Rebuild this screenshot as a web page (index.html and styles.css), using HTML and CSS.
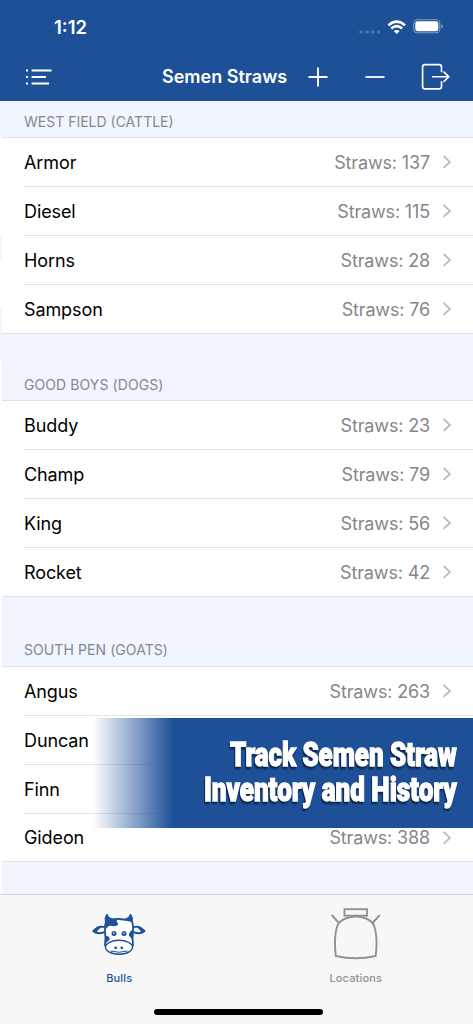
FILE: index.html
```html
<!DOCTYPE html>
<html lang="en">
<head>
<meta charset="utf-8">
<title>Semen Straws</title>
<link rel="stylesheet" href="styles.css">
</head>
<body>
<svg width="0" height="0" class="defs"><symbol id="chevron" viewBox="0 0 10 16"><path d="M1.6 1.9 7.8 7.9 1.6 13.9" fill="none" stroke="#bdbdc1" stroke-width="2"/></symbol></svg>
<div class="screen">
  <header class="top">
    <div class="status">
      <span class="time">1:12</span>
      <div class="indicators">
        <svg class="dots" width="22" height="6" viewBox="0 0 22 6" fill="#4d76ae"><circle cx="2" cy="3" r="1.8"/><circle cx="8" cy="3" r="1.8"/><circle cx="13.8" cy="3" r="1.8"/><circle cx="19.6" cy="3" r="1.8"/></svg>
        <svg class="wifi" width="20" height="15" viewBox="0 0 20 15" fill="none" stroke="#fff" stroke-width="2.5"><path d="M1.4 5.4Q9.7-2.2 18 5.4M4.3 8.5q5.4-4.8 10.8 0"/><path d="m9.7 14-2.9-2.9q2.9-2.2 5.8 0z" fill="#fff" stroke="none"/></svg>
        <svg class="battery" width="31" height="16" viewBox="0 0 31 16"><rect x=".8" y=".8" width="26" height="13" rx="3.6" fill="none" stroke="#7f9bc6" stroke-width="1.1"/><rect x="2.3" y="2.3" width="23" height="10" rx="2.2" fill="#fff"/><path d="M28.4 5.2q1.6.7 1.6 2.2t-1.6 2.2z" fill="#7f9bc6"/></svg>
      </div>
    </div>
    <nav class="nav">
      <svg class="list-icon" width="28" height="20" viewBox="0 0 28 20" fill="none" stroke="#fff" stroke-width="2"><path d="M1 3.500h2M1 10h2M1 16.500h2M6.600 3.500h20M6.600 10h14.300M6.600 16.500h17.500"/></svg>
      <h1>Semen Straws</h1>
      <svg class="plus" width="20" height="20" viewBox="0 0 20 20" stroke="#fff" stroke-width="1.8"><path d="M.5 10h19M10 .5v19"/></svg>
      <svg class="minus" width="20" height="20" viewBox="0 0 20 20" stroke="#fff" stroke-width="1.8"><path d="M.5 10h19"/></svg>
      <svg class="exit" width="30" height="28" viewBox="0 0 30 28" fill="none" stroke="#fff" stroke-width="1.6"><path d="M20.500 9.200V4q0-2.400-2.400-2.400H4Q1.600 1.600 1.600 4v19.500q0 2.400 2.400 2.400h14.100q2.400 0 2.400-2.400v-5.200M11 13.800h16.800M22.500 8.700l5.300 5.100-5.300 5.100"/></svg>
    </nav>
  </header>
  <main class="content">
    <section>
      <h2 class="first">WEST FIELD (CATTLE)</h2>
      <ul>
        <li><b>Armor</b><span>Straws: 137</span><svg><use href="#chevron"/></svg></li>
        <li><b>Diesel</b><span>Straws: 115</span><svg><use href="#chevron"/></svg></li>
        <li><b>Horns</b><span>Straws: 28</span><svg><use href="#chevron"/></svg></li>
        <li><b>Sampson</b><span>Straws: 76</span><svg><use href="#chevron"/></svg></li>
      </ul>
    </section>
    <section>
      <h2 class="second">GOOD BOYS (DOGS)</h2>
      <ul>
        <li><b>Buddy</b><span>Straws: 23</span><svg><use href="#chevron"/></svg></li>
        <li><b>Champ</b><span>Straws: 79</span><svg><use href="#chevron"/></svg></li>
        <li><b>King</b><span>Straws: 56</span><svg><use href="#chevron"/></svg></li>
        <li><b>Rocket</b><span>Straws: 42</span><svg><use href="#chevron"/></svg></li>
      </ul>
    </section>
    <section>
      <h2 class="third">SOUTH PEN (GOATS)</h2>
      <ul>
        <li><b>Angus</b><span>Straws: 263</span><svg><use href="#chevron"/></svg></li>
        <li><b>Duncan</b></li>
        <li><b>Finn</b></li>
        <li><b>Gideon</b><span>Straws: 388</span><svg><use href="#chevron"/></svg></li>
      </ul>
    </section>
    <i class="edge"></i>
  </main>
  <footer class="tabs">
    <a class="tab active">
      <svg width="54" height="46" viewBox="0 0 54 46" fill="none" stroke="#1f5199" stroke-width="1.8" stroke-linejoin="round">
        <path fill="#1f5199" stroke-width="1" d="M13.500 10.500Q12 5.500 15 2 16 6 20 7zM40 10.500Q41.500 5.500 38.500 2 37.500 6 33.500 7z"/>
        <path d="M13 15.500Q7 12.500 1.200 19.200 5 23 13 19.800M41 15.500Q46.500 12.500 52.600 19.200 48.500 23 41 19.800"/>
        <path fill="#1f5199" stroke="none" d="M1 19.500Q5 12.500 12.500 14.500 7.500 15 4.500 20.500zM52.800 19.500Q48.500 12.500 41.500 14.500 46.500 15 49.500 20.500z"/>
        <path fill="#fff" d="M14.500 9Q20 6.500 27 7T39.500 9Q41.600 12 41 20 40 26 41 33 39 42 27 42 15 42 13 33 14 26 13 20 12.500 12 14.500 9Z"/>
        <path fill="#1f5199" stroke="none" d="M14 9.500Q19 6 25 7.200 24 9.500 26.500 12 24 15 20.500 14 16.500 12.500 14 17zM13.200 24Q18.500 23.500 17.500 28 14.500 29.500 13 33zM41 17.500Q36 20.500 37 24 40 25.500 40.800 31z"/>
        <ellipse cx="27" cy="35.200" rx="13.500" ry="6.900" stroke-width="1.400" fill="#fff"/><path d="M18.500 39Q27 41.500 35.500 39" stroke-width="1"/>
        <g fill="#1f5199" stroke="none"><circle cx="22" cy="21.500" r="2.500"/><circle cx="32" cy="21.500" r="2.500"/><circle cx="23.700" cy="35.800" r="1.400"/><circle cx="29.800" cy="35.800" r="1.400"/></g>
        <g fill="#fff" stroke="none"><circle cx="21.800" cy="21" r=".8"/><circle cx="31.800" cy="21" r=".8"/></g>
      </svg>
      <span>Bulls</span>
    </a>
    <a class="tab">
      <svg class="tank" width="52" height="54" viewBox="0 0 52 54" fill="none" stroke="#929292" stroke-width="1.900"><rect x="14.500" y="2.200" width="22.500" height="6.500"/><path d="M5.800 49Q3.500 30 7.500 18.500 9.500 14 15.500 11.500 25.700 7.500 36 11.500 42 14 44 18.500 48 30 45.700 49 25.700 53.500 5.800 49ZM8.500 15.500 1.700 8M43 15.500 49.800 8"/></svg>
      <span>Locations</span>
    </a>
    <i class="home"></i>
  </footer>
  <div class="banner">
    <svg width="270" height="110" viewBox="0 0 270 110">
      <text transform="translate(27 48) scale(.79 1)" textLength="287" lengthAdjust="spacingAndGlyphs">Track Semen Straw</text>
      <text transform="translate(1 83) scale(.79 1)" textLength="320" lengthAdjust="spacingAndGlyphs">Inventory and History</text>
    </svg>
  </div>
</div>
</body>
</html>
```

FILE: styles.css
```css
* { box-sizing: border-box; }
body { margin: 0; font-family: Inter, "Liberation Sans", sans-serif; background: #fff; }
.defs { position: absolute; }
.screen { position: relative; width: 473px; height: 1024px; overflow: hidden; display: flex; flex-direction: column; background: #f0f5ff; }
.top { height: 101px; background: #1e5098; color: #fff; flex: none; }
.status { height: 52px; padding: 2px 29px 0 54px; display: flex; justify-content: space-between; align-items: center; }
.time { font-size: 18.5px; font-weight: 600; }
.indicators { display: flex; align-items: center; }
.dots { margin: 9px 6px 0 0; }
.wifi { margin-right: 6px; }
.nav { height: 49px; display: flex; align-items: center; padding: 0 22px 0 25px; }
.nav svg { flex: none; }
h1 { margin: 0 0 0 109px; width: 126px; font-size: 18px; font-weight: 600; white-space: nowrap; }
.plus { margin-left: 20px; }
.minus { margin-left: 37px; }
.exit { margin-left: auto; }
.content { position: relative; height: 793px; flex: none; }
h2 { margin: 0; padding: 42px 0 0 24px; font-size: 14px; line-height: 18px; font-weight: 400; letter-spacing: .08px; color: #87888d; border-bottom: 1px solid #dfe1e6; white-space: nowrap; }
h2.first { height: 37px; padding-top: 12px; letter-spacing: 0; }
h2.second { height: 67px; }
h2.third { height: 70px; padding-top: 44px; }
ul { margin: 0; padding: 0 0 0 24px; list-style: none; background: #fff; border-bottom: 1px solid #dfe1e6; }
li { height: 49px; display: flex; align-items: center; padding-right: 21px; font-size: 18px; color: #86868a; border-bottom: 1px solid #e4e4e6; }
li:last-child { border: 0; height: 48px; }
section:nth-child(2) li:last-child { height: 48px; }
section:nth-child(3) li:last-child { height: 47px; }
li b { flex: 1; font-weight: 400; color: #000; letter-spacing: -.1px; }
li span { letter-spacing: -.15px; }
li svg { width: 10px; height: 16px; margin-left: 12px; }
.edge { position: absolute; left: 0; top: 36px; width: 2px; height: 757px; background: linear-gradient(#fff 99px, #f0f5ff 99px 123px, #fff 123px 170px, #f0f5ff 170px 223px, #fff 223px); }
.tabs { position: relative; height: 130px; background: #f7f7f7; border-top: 1px solid #d5d8df; display: grid; grid-template-columns: 1fr 1fr; }
.tab { display: flex; flex-direction: column; align-items: center; padding: 17px 0 0 2px; font-size: 11px; font-weight: 500; color: #929292; }
.tab.active { color: #1f5199; }
.tab span { height: 14px; line-height: 14px; margin-top: 13px; letter-spacing: .15px; }
.tab .tank { margin-top: -5px; margin-bottom: -3px; }
.home { position: absolute; left: 154px; top: 114px; width: 169px; height: 6px; border-radius: 3px; background: #000; }
.banner { position: absolute; left: 93px; top: 718px; width: 380px; height: 110px; background: linear-gradient(90deg, rgba(30,80,152,0), #1e5098 80px); display: flex; padding-left: 110px; }
.banner svg { overflow: visible; }
.banner text { font-family: Roboto, sans-serif; font-weight: 900; font-size: 33px; fill: #fff; stroke: #fff; stroke-width: 1.3px; filter: drop-shadow(-1px 2px 1px #071f40); }
```
